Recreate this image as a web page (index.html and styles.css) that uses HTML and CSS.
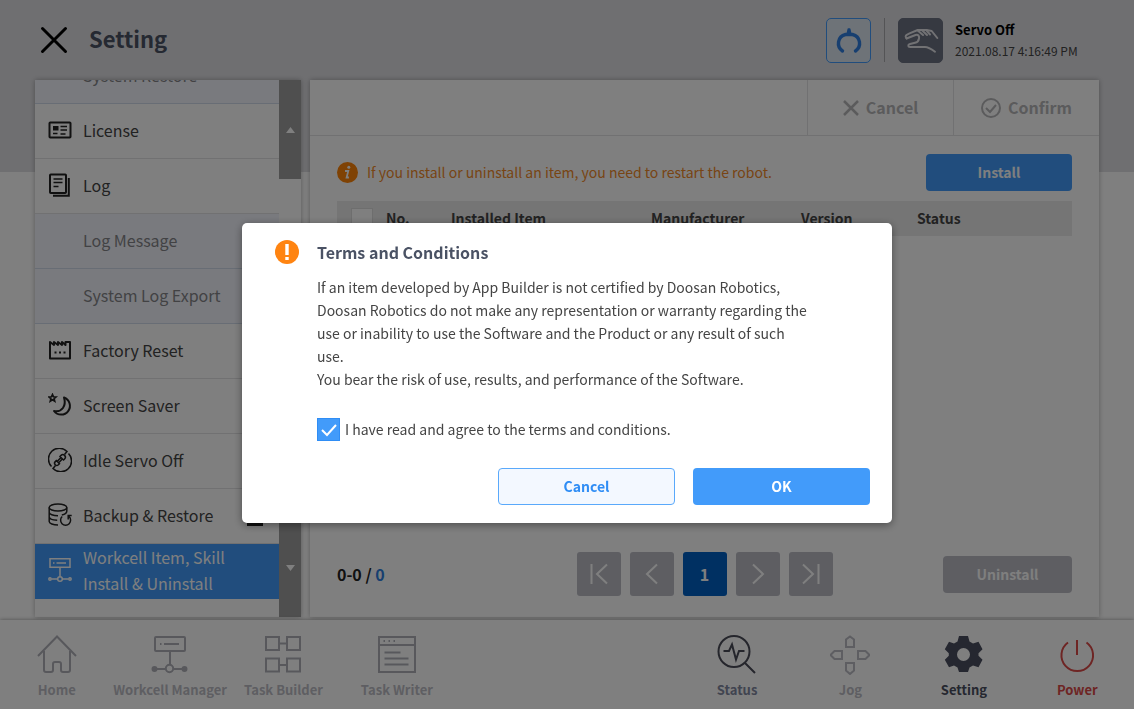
FILE: index.html
```html
<!DOCTYPE html>
<html lang="en">
<head>
<meta charset="utf-8">
<title>Setting</title>
<link rel="stylesheet" href="styles.css">
</head>
<body>
<div class="app">
  <header class="header">
    <button class="close" type="button" aria-label="Close">
      <svg width="28" height="28" viewBox="0 0 28 28"><path d="M2.500 2.500 25.500 25.500M25.500 2.500 2.500 25.500" stroke="#000" stroke-width="3" stroke-linecap="round"/></svg>
    </button>
    <h1 class="title">Setting</h1>
    <div class="status">
      <button class="tool" type="button" aria-label="Gripper">
        <svg width="44" height="44" viewBox="0 0 44 44" fill="none" stroke="#2f7fe0" stroke-width="3.400" stroke-linecap="round"><path d="M15.500 32C9 27.500 10.500 17.500 18.500 15.500h7C33.500 17.500 35 27.500 28.500 32"/><path d="M20 15.500l1.300-5.500h1.400l1.300 5.500z" stroke-width="1.500" stroke-linejoin="round" fill="#2f7fe0"/></svg>
      </button>
      <span class="divider"></span>
      <button class="tool tool-dark" type="button" aria-label="Hand guiding">
        <svg width="44" height="44" viewBox="0 0 44 44" fill="none" stroke="#e4e4e8" stroke-width="2" stroke-linecap="round" stroke-linejoin="round"><path d="M7.500 19.500C5.500 17 7 16 10 14.700l8.700-3.700h9l5 1 5.600 7"/><path d="M7.500 19.500l9-3.500c3-1 4 1.500 3.500 3.500-.5 3-2 4-4 4.300l-5 1.200c-2.500.8-2 3 0 3h15c3 0 5 1 10 4.700"/><path d="M18.700 11.500l5.300 4.500M23.300 11.500l4.700 4.500M27.500 11.500l3.500 4"/></svg>
      </button>
      <div class="status-text">
        <strong>Servo Off</strong>
        <time>2021.08.17 4:16:49 PM</time>
      </div>
    </div>
  </header>

  <main class="main">
    <aside class="sidebar">
      <nav class="menu">
        <a href="#" class="item sub">System Restore</a>
        <a href="#" class="item">
          <svg class="ico" viewBox="0 0 24 24"><rect x="1.500" y="4.500" width="21" height="15" rx=".8"/><path class="f" d="M5 8h5.500v4.500H5z"/><path d="M12.500 8.500h6.500M12.500 12h6.500M12.500 16h5M5 15.500h4.500" stroke-width="1.300"/></svg>
          <span>License</span></a>
        <a href="#" class="item">
          <svg class="ico" viewBox="0 0 24 24"><rect x="2" y="1.500" width="16" height="18.500" rx=".8"/><path d="M20.800 5v17.800H5"/><path d="M5.500 6h9M5.500 9.500h9M5.500 13.500h5" stroke-width="1.500"/></svg>
          <span>Log</span></a>
        <a href="#" class="item sub">Log Message</a>
        <a href="#" class="item sub">System Log Export</a>
        <a href="#" class="item">
          <svg class="ico" viewBox="0 0 24 24"><path d="M2 20.500V4l4 3V4l4 3V4l4 3V4l3.500 3V4h4.500v16.500z" stroke-linejoin="round"/><path d="M6.500 14.500h2M11 14.500h2M15.500 14.500h2" stroke-width="2"/></svg>
          <span>Factory Reset</span></a>
        <a href="#" class="item">
          <svg class="ico" viewBox="0 0 24 24"><path d="M16 4.500a8.800 8.800 0 1 1-10 13.500c8 1.500 12.500-5 10-13.500z" stroke-linejoin="round"/><path d="M4.500 1.500l1 2.300 2.500.2-1.900 1.700.6 2.500-2.200-1.400-2.200 1.400.6-2.500L1 4l2.500-.2z" stroke-width="1.700"/></svg>
          <span>Screen Saver</span></a>
        <a href="#" class="item">
          <svg class="ico thin" viewBox="0 0 24 24"><path d="M3.500 18.500A10.700 10.700 0 0 1 19 3.500L16.500 6.500M20.500 5.500A10.700 10.700 0 0 1 5 20.500L7.500 17.500"/><g transform="rotate(-45 12 12)"><path d="M9 9.800v4.400H7.500a2.200 2.200 0 0 1 0-4.400zM14.500 9.500v5H16a2.500 2.500 0 0 0 0-5zM9.500 11h4.500M9.500 13h4.500"/></g></svg>
          <span>Idle Servo Off</span></a>
        <a href="#" class="item">
          <svg class="ico thin" viewBox="0 0 24 24"><ellipse cx="10" cy="4.500" rx="8.800" ry="3.500"/><path d="M1.200 4.500v14c0 2 4 3.500 8.800 3.500M18.800 4.500v4M1.200 9.200c0 2 4 3.500 8.800 3.500M1.200 13.800c0 2 3 3.300 8 3.500M18.800 8c0 2-2.500 3.500-5 4"/><path d="M14.200 13.500a5 5 0 1 0 6.800 0M20.200 16.500v-4h3.500"/></svg>
          <span>Backup &amp; Restore</span>
          <i class="expand"></i></a>
        <a href="#" class="item active">
          <svg class="ico thin" viewBox="0 0 24 24"><path d="M2 .800h20v8.400H2zM5 5h1.500M8.500 5H18M12 9.500v9M3.500 21h6M14.500 21h6"/><circle cx="12" cy="21" r="2.300"/><circle cx="2" cy="21" r="1.200"/><circle cx="22" cy="21" r="1.200"/></svg>
          <span>Workcell Item, Skill Install &amp; Uninstall</span></a>
      </nav>
      <div class="scroll">
        <button type="button" aria-label="Scroll up"><svg width="9" height="6" viewBox="0 0 9 6"><path d="M0 6 4.500 0 9 6z" fill="#fff"/></svg></button>
        <button type="button" aria-label="Scroll down"><svg width="9" height="6" viewBox="0 0 9 6"><path d="M0 0h9L4.500 6z" fill="#fff"/></svg></button>
      </div>
    </aside>

    <section class="panel">
      <div class="toolbar">
        <button type="button" disabled><svg width="16" height="16" viewBox="0 0 16 16"><path d="M1 1 15 15M15 1 1 15" stroke="#b6b6b9" stroke-width="2.500"/></svg>Cancel</button>
        <button type="button" disabled><svg width="20" height="20" viewBox="0 0 20 20" fill="none" stroke="#b6b6b9" stroke-width="2"><circle cx="10" cy="10" r="9"/><path d="M5 10l4 4 6-7"/></svg>Confirm</button>
      </div>
      <div class="content">
        <div class="notice">
          <svg width="21" height="21" viewBox="0 0 21 21"><circle cx="10.500" cy="10.500" r="10.500" fill="#ff8408"/><circle cx="11.800" cy="5.300" r="1.500" fill="#fff"/><path d="M8 9h3.300l-1.700 6.500h2.300" fill="none" stroke="#fff" stroke-width="1.800"/></svg>
          <p>If you install or uninstall an item, you need to restart the robot.</p>
          <button class="btn primary install" type="button">Install</button>
        </div>
        <table class="table">
          <colgroup><col class="c-check"><col class="c-no"><col class="c-item"><col class="c-maker"><col class="c-version"><col></colgroup>
          <thead><tr><th><input class="check-all" type="checkbox" aria-label="Select all"></th><th>No.</th><th>Installed Item</th><th>Manufacturer</th><th>Version</th><th>Status</th></tr></thead>
        </table>
        <div class="bottom">
          <p class="count">0-0 / <span>0</span></p>
          <div class="pager">
            <button type="button" aria-label="First page"><svg viewBox="0 0 44 44"><path d="M14.500 12v20M30 12.500 20 22l10 9.500"/></svg></button>
            <button type="button" aria-label="Previous page"><svg viewBox="0 0 44 44"><path d="M27 12.500 17 22l10 9.500"/></svg></button>
            <button type="button" class="current">1</button>
            <button type="button" aria-label="Next page"><svg viewBox="0 0 44 44"><path d="M17 12.500 27 22l-10 9.500"/></svg></button>
            <button type="button" aria-label="Last page"><svg viewBox="0 0 44 44"><path d="M29.500 12v20M14 12.500 24 22l-10 9.500"/></svg></button>
          </div>
          <button class="btn muted uninstall" type="button" disabled>Uninstall</button>
        </div>
      </div>
    </section>
  </main>

  <footer class="dock">
    <a href="#"><svg viewBox="0 0 40 40"><path d="M1 21 20 1.500 39 21M7 16v19q0 2 2 2h5q2 0 2-2v-6q0-2 2-2h4q2 0 2 2v6q0 2 2 2h5q2 0 2-2V16"/></svg>Home</a>
    <a href="#"><svg viewBox="0 0 40 40"><rect x="5" y="2" width="30" height="14" rx="1"/><path d="M10 9h1.500M14 9h15M20 16v14M5 34h10M24 34h10"/><circle cx="19.500" cy="33.500" r="3.700"/><circle cx="4.500" cy="34" r="2" class="fill"/><circle cx="34.500" cy="34" r="2" class="fill"/></svg>Workcell Manager</a>
    <a href="#"><svg viewBox="0 0 40 40"><path d="M3 2h13v13H3zM24 2h13v13H24zM3 23.500h13v13H3zM24 23.500h13v13H24zM16 8.500h8M16 30h8"/></svg>Task Builder</a>
    <a href="#"><svg viewBox="0 0 40 40"><path d="M2 2h36v35H2zM2 10h36M6.500 6h1.500M11.500 6H13M16.500 6H18M7.500 17.500h16M7.500 23.500h24M7.500 29.500h24"/></svg>Task Writer</a>
    <a href="#" class="status-link"><svg viewBox="0 0 40 40"><circle cx="17" cy="16.500" r="15.500"/><path d="M28 28l10 10M6.500 16H12l3-6.500 4 15 3-8.500h5.500"/></svg>Status</a>
    <a href="#" class="jog"><svg viewBox="0 0 40 40"><path d="M16 12V4.500L20 1.500l4 3V12zM16 28v7.500l4 3.500 4-3.500V28zM12 16H4.500L.500 20l4 4H12zM28 16h7.500l4 4-4 4H28z"/></svg>Jog</a>
    <a href="#" class="setting"><svg viewBox="0 0 40 40"><path class="fill" fill-rule="evenodd" d="M15 1h9l1.500 5.500 3.500 2 5.500-1.700 4 7.500-4 4v2.500l4 4-4 7.500-5.500-1.800-3.500 2L24 37h-9l-1.500-4.500-3.500-2L5 32.300.800 24.800l4-4v-2.500l-4-4L5 6.800l5 1.700 3.500-2zM19.500 13a6.500 6.500 0 1 0 0 13 6.500 6.500 0 0 0 0-13z"/></svg>Setting</a>
    <a href="#" class="power"><svg viewBox="0 0 40 40"><path d="M20 5v15M11 7.500a15.800 15.800 0 1 0 18.500 0"/></svg>Power</a>
  </footer>
</div>

<div class="overlay">
  <section class="dialog" role="dialog" aria-modal="true" aria-labelledby="terms-title">
    <svg class="warn" width="24" height="24" viewBox="0 0 24 24"><circle cx="12" cy="12" r="12" fill="#ff8411"/><path d="M10.300 4h3.400v11h-3.400zM10.300 17h3.400v3h-3.400z" fill="#fff"/></svg>
    <h2 id="terms-title">Terms and Conditions</h2>
    <div class="terms">
      <p>If an item developed by App Builder is not certified by Doosan Robotics, Doosan Robotics do not make any representation or warranty regarding the use or inability to use the Software and the Product or any result of such use.</p>
      <p>You bear the risk of use, results, and performance of the Software.</p>
      <label class="agree"><input type="checkbox" checked><span>I have read and agree to the terms and conditions.</span></label>
    </div>
    <div class="actions">
      <button class="btn outline" type="button">Cancel</button>
      <button class="btn primary" type="button">OK</button>
    </div>
  </section>
</div>
</body>
</html>
```

FILE: styles.css
```css
* { box-sizing: border-box; }
body {
  margin: 0;
  font: 14px/23px "Noto Sans CJK KR", "Noto Sans", sans-serif;
  color: #444;
}
h1, h2, p { margin: 0; }
button { font: inherit; padding: 0; border: 0; background: none; color: inherit; }
a { color: inherit; text-decoration: none; }
svg { display: block; flex: none; }

.app {
  display: flex;
  flex-direction: column;
  height: 100vh;
  background: linear-gradient(#dfdfe3 172px, #fff 172px);
  overflow: hidden;
}

/* Header */
.header {
  display: flex;
  align-items: center;
  flex: none;
  height: 80px;
  padding: 0 52px 0 40px;
}
.title { margin-left: 21px; padding-bottom: 4px; font-size: 22px; line-height: 32px; color: #4a5264; }
.status { display: flex; align-items: center; margin-left: auto; }
.tool {
  display: grid;
  place-items: center;
  width: 45px;
  height: 45px;
  border: 1px solid #429bfa;
  border-radius: 5px;
  background: #dde6f0;
}
.tool-dark { border-color: #6c7283; background: #6c7283; }
.divider { width: 1px; height: 44px; margin: 0 13px; background: #a8a8ac; }
.status-text { margin-left: 12px; min-width: 127px; font-size: 13px; line-height: 21px; white-space: nowrap; }
.status-text strong { display: block; color: #000; }
.status-text time { display: block; font-size: 12px; }

/* Main area */
.main { display: flex; gap: 9px; flex: 1; min-height: 0; padding: 0 35px 3px; }
.sidebar, .panel { background: #fff; box-shadow: 0 0 5px rgba(0, 0, 0, .3); }
.sidebar { display: flex; flex: none; width: 266px; }
.menu {
  display: flex;
  flex-direction: column;
  justify-content: flex-end;
  flex: 1;
  padding-bottom: 18px;
  overflow: hidden;
}
.item {
  display: flex;
  align-items: center;
  flex: none;
  gap: 11px;
  height: 55px;
  padding: 0 16px 2px 13px;
  border-bottom: 1px solid #e2e2e4;
  font-size: 16px;
  line-height: 26px;
}
.item.sub { padding-left: 48px; background: #f3f5fd; border-color: #d0dbea; color: #858589; }
.item.active { padding-right: 40px; background: #429bfa; border-color: #429bfa; color: #fff; }
.ico { width: 24px; height: 24px; fill: none; stroke: #222; stroke-width: 2; }
.ico.thin { stroke-width: 1.5; }
.ico .f { fill: #222; stroke: none; }
.active .ico { stroke: #fff; overflow: visible; }
.expand { width: 16px; height: 22px; margin-left: auto; background: #222; }
.scroll { display: flex; flex-direction: column; justify-content: space-between; width: 22px; }
.scroll button { display: grid; place-items: center; height: 99px; background: #9e9e9e; }

.panel { display: flex; flex-direction: column; flex: 1; min-width: 0; }
.toolbar {
  display: flex;
  justify-content: flex-end;
  flex: none;
  height: 56px;
  border-bottom: 1px solid #e2e2e4;
}
.toolbar button {
  display: flex;
  align-items: center;
  justify-content: center;
  gap: 7px;
  width: 146px;
  border-left: 1px solid #e2e2e4;
  font-size: 16px;
  font-weight: 700;
  color: #b6b6b9;
}
.content { display: flex; flex-direction: column; flex: 1; padding: 18px 27px 21px; }
.notice { display: flex; align-items: center; gap: 9px; color: #f08a2a; }
.btn {
  height: 37px;
  border-radius: 4px;
  font-size: 14px;
  font-weight: 700;
}
.primary { background: #429bfa; color: #fff; }
.outline { border: 1px solid #5aa9fb; background: #f3f8ff; color: #2f8df5; }
.muted { background: #bcbdc5; color: #fff; }
.install { width: 146px; margin-left: auto; }
.uninstall { width: 129px; justify-self: end; }

.table { width: 100%; margin-top: 10px; table-layout: fixed; border-collapse: collapse; background: #ebebeb; }
.table th { height: 35px; padding: 0; text-align: left; color: #444; }
.c-check { width: 49px; }
.c-no { width: 65px; }
.c-item { width: 200px; }
.c-maker { width: 150px; }
.c-version { width: 116px; }
.check-all {
  display: block;
  width: 22px;
  height: 22px;
  margin: 0 0 0 14px;
  appearance: none;
  border: 1px solid #ddd;
  background: #fff;
}

.bottom { display: grid; grid-template-columns: 1fr auto 1fr; align-items: center; margin-top: auto; }
.count { font-size: 16px; font-weight: 700; color: #222; }
.count span { color: #2f7fe0; }
.pager { display: flex; gap: 9px; }
.pager button {
  width: 44px;
  height: 44px;
  border-radius: 3px;
  background: #bcbdc5;
  font-size: 16px;
  font-weight: 700;
  color: #fff;
}
.pager svg { width: 44px; height: 44px; fill: none; stroke: #fff; stroke-width: 2; }
.pager .current { background: #0060c4; }

/* Bottom navigation */
.dock {
  display: grid;
  grid-template-columns: repeat(10, minmax(0, 1fr));
  flex: none;
  height: 89px;
  padding-top: 15px;
  background: #fff;
  box-shadow: 0 0 4px rgba(0, 0, 0, .4);
  font-size: 13px;
  font-weight: 700;
  line-height: 20px;
  color: #bcbdc5;
}
.dock a { display: flex; flex-direction: column; align-items: center; gap: 5px; white-space: nowrap; }
.dock svg { width: 40px; height: 40px; fill: none; stroke: #b0b1b9; stroke-width: 2; }
.dock .fill { fill: #b0b1b9; }
.status-link { grid-column: 7; color: #8288a0; }
.dock .status-link svg { stroke: #4b4c59; }
.dock .jog svg { stroke: #bcbdc5; }
.setting { color: #4b4f60; }
.dock .setting svg { stroke: none; }
.dock .setting .fill { fill: #4b4f60; }
.power { color: #dc4a48; }
.dock .power svg { stroke: #dc4a48; }

/* Dialog */
.overlay {
  position: fixed;
  inset: 0;
  display: flex;
  align-items: center;
  justify-content: center;
  padding-top: 36px;
  background: rgba(0, 0, 0, .5);
}
.dialog {
  display: grid;
  grid-template-columns: 24px 1fr;
  column-gap: 18px;
  width: 650px;
  padding: 17px 22px 18px 33px;
  border-radius: 5px;
  background: #fff;
  box-shadow: 0 2px 8px rgba(0, 0, 0, .4);
}
.dialog h2 { font-size: 16px; line-height: 24px; color: #4a5264; }
.terms { grid-column: 2; padding: 12px 58px 0 0; }
.agree { display: flex; align-items: center; gap: 5px; margin-top: 27px; }
.agree input {
  width: 23px;
  height: 23px;
  margin: 0;
  appearance: none;
  border: 1px solid #2f8df5;
  background: #429bfa url("data:image/svg+xml,%3Csvg xmlns='http://www.w3.org/2000/svg' viewBox='0 0 21 21'%3E%3Cpath d='M4 11l5 5 9-10' fill='none' stroke='white' stroke-width='2'/%3E%3C/svg%3E");
}
.actions { display: flex; grid-column: 1 / -1; justify-content: flex-end; gap: 18px; margin-top: 27px; }
.actions .btn { width: 177px; }
```
